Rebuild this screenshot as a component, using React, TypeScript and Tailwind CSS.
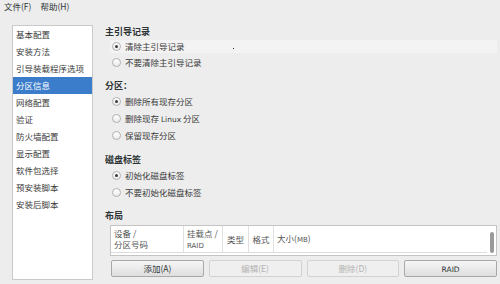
import React from 'react';

const navItems = [
  '基本配置',
  '安装方法',
  '引导装载程序选项',
  '分区信息',
  '网络配置',
  '验证',
  '防火墙配置',
  '显示配置',
  '软件包选择',
  '预安装脚本',
  '安装后脚本',
];

const Radio = ({ checked }: { checked?: boolean }) => (
  <span className="w-[9px] h-[9px] rounded-full border border-[#b0b0b0] bg-gradient-to-b from-white to-[#ececec] flex items-center justify-center shrink-0">
    {checked && <span className="w-[3px] h-[3px] rounded-full bg-[#3a3a3a]" />}
  </span>
);

const RadioRow = ({ label, checked, className }: { label: React.ReactNode; checked?: boolean; className: string }) => (
  <div className={`flex items-center gap-[4px] ml-[5px] pl-[2px] ${className}`}>
    <Radio checked={checked} />
    <span className="text-[8.5px] text-[#3a3a3a]">{label}</span>
  </div>
);

const Header = ({ children, className }: { children: React.ReactNode; className: string }) => (
  <div className={`h-[14px] flex items-center text-[9px] font-bold text-[#2e3436] ${className}`}>{children}</div>
);

const Button = ({ children, disabled }: { children: React.ReactNode; disabled?: boolean }) => (
  <button
    className={
      disabled
        ? 'h-[17px] rounded-[2px] border border-[#d2d2d2] bg-[#efefef] text-[8.5px] text-[#b3b3b3]'
        : 'h-[17px] rounded-[2px] border border-[#a8a8a8] bg-gradient-to-b from-[#f6f6f6] to-[#dedede] text-[8.5px] text-[#2e3436]'
    }
  >
    {children}
  </button>
);

const Latin = ({ children, size }: { children: React.ReactNode; size: string }) => (
  <span className={size} style={{ fontFamily: '"DejaVu Sans", sans-serif' }}>
    {children}
  </span>
);

export default function App() {
  return (
    <div
      className="w-[500px] h-[284px] bg-[#ededed] overflow-hidden"
      style={{ fontFamily: '"Noto Sans CJK SC", "Noto Sans", sans-serif' }}
    >
      <div className="h-[13px] flex items-center gap-[9px] pl-[4px] text-[8.5px] text-[#2e3436]">
        <span>文件(F)</span>
        <span>帮助(H)</span>
      </div>

      <div className="flex mt-[12px]">
        <div className="ml-[12px] w-[81px] h-[255px] bg-white border border-[#c9c9c9]">
          {navItems.map((item) => (
            <div
              key={item}
              className={
                item === '分区信息'
                  ? 'h-[17px] flex items-center pl-[3px] text-[8.5px] bg-[#3b7dca] text-white'
                  : 'h-[17px] flex items-center pl-[3px] text-[8.5px] text-[#3a3a3a]'
              }
            >
              {item}
            </div>
          ))}
        </div>

        <div className="ml-[12px] w-[392px] flex flex-col">
          <Header className="">主引导记录</Header>
          <div className="relative mt-[1px] ml-[5px] h-[13px] bg-[#f3f3f3] flex items-center gap-[4px] pl-[2px]">
            <Radio checked />
            <span className="text-[8.5px] text-[#3a3a3a]">清除主引导记录</span>
            <span className="absolute left-[123px] top-[8px] w-[1px] h-[1px] bg-[#333]" />
          </div>
          <RadioRow label="不要清除主引导记录" className="mt-[3px] h-[13px]" />

          <Header className="mt-[10px]">分区：</Header>
          <RadioRow label="删除所有现存分区" checked className="h-[17px]" />
          <RadioRow
            label={
              <>
                删除现存 <Latin size="text-[7.5px]">Linux</Latin> 分区
              </>
            }
            className="h-[17px]"
          />
          <RadioRow label="保留现存分区" className="h-[17px]" />

          <Header className="mt-[9px]">磁盘标签</Header>
          <RadioRow label="初始化磁盘标签" checked className="h-[17px]" />
          <RadioRow label="不要初始化磁盘标签" className="h-[17px]" />

          <Header className="mt-[8px]">布局</Header>
          <div className="mt-[2px] ml-[5px] h-[31px] bg-white border border-[#c4c4c4] flex">
            <div className="flex-1 flex flex-col">
              <div className="h-[27px] flex border-b border-[#dcdcdc] text-[8.5px] text-[#555]">
                <div className="w-[73px] border-r border-[#e0e0e0] pl-[3px] leading-[11px] pt-[2px]">
                  <div>设备 /</div>
                  <div>分区号码</div>
                </div>
                <div className="w-[39px] border-r border-[#e0e0e0] pl-[3px] leading-[11px] pt-[2px]">
                  <div>挂载点 /</div>
                  <div>
                    <Latin size="text-[7px]">RAID</Latin>
                  </div>
                </div>
                <div className="w-[26px] border-r border-[#e0e0e0] flex items-center justify-center">类型</div>
                <div className="w-[25px] border-r border-[#e0e0e0] flex items-center justify-center">格式</div>
                <div className="flex-1 flex items-center pl-[3px]">
                  <span>
                    大小(<Latin size="text-[7px]">MB</Latin>)
                  </span>
                </div>
              </div>
            </div>
            <div className="w-[9px] flex justify-center pt-[6px]">
              <span className="w-[4px] h-[21px] rounded-full bg-[#9a9a9a]" />
            </div>
          </div>

          <div className="mt-[4px] ml-[6px] grid grid-cols-4 gap-[5px]">
            <Button>添加(A)</Button>
            <Button disabled>编辑(E)</Button>
            <Button disabled>删除(D)</Button>
            <Button>
              <Latin size="text-[7.5px]">RAID</Latin>
            </Button>
          </div>
        </div>
      </div>
    </div>
  );
}
